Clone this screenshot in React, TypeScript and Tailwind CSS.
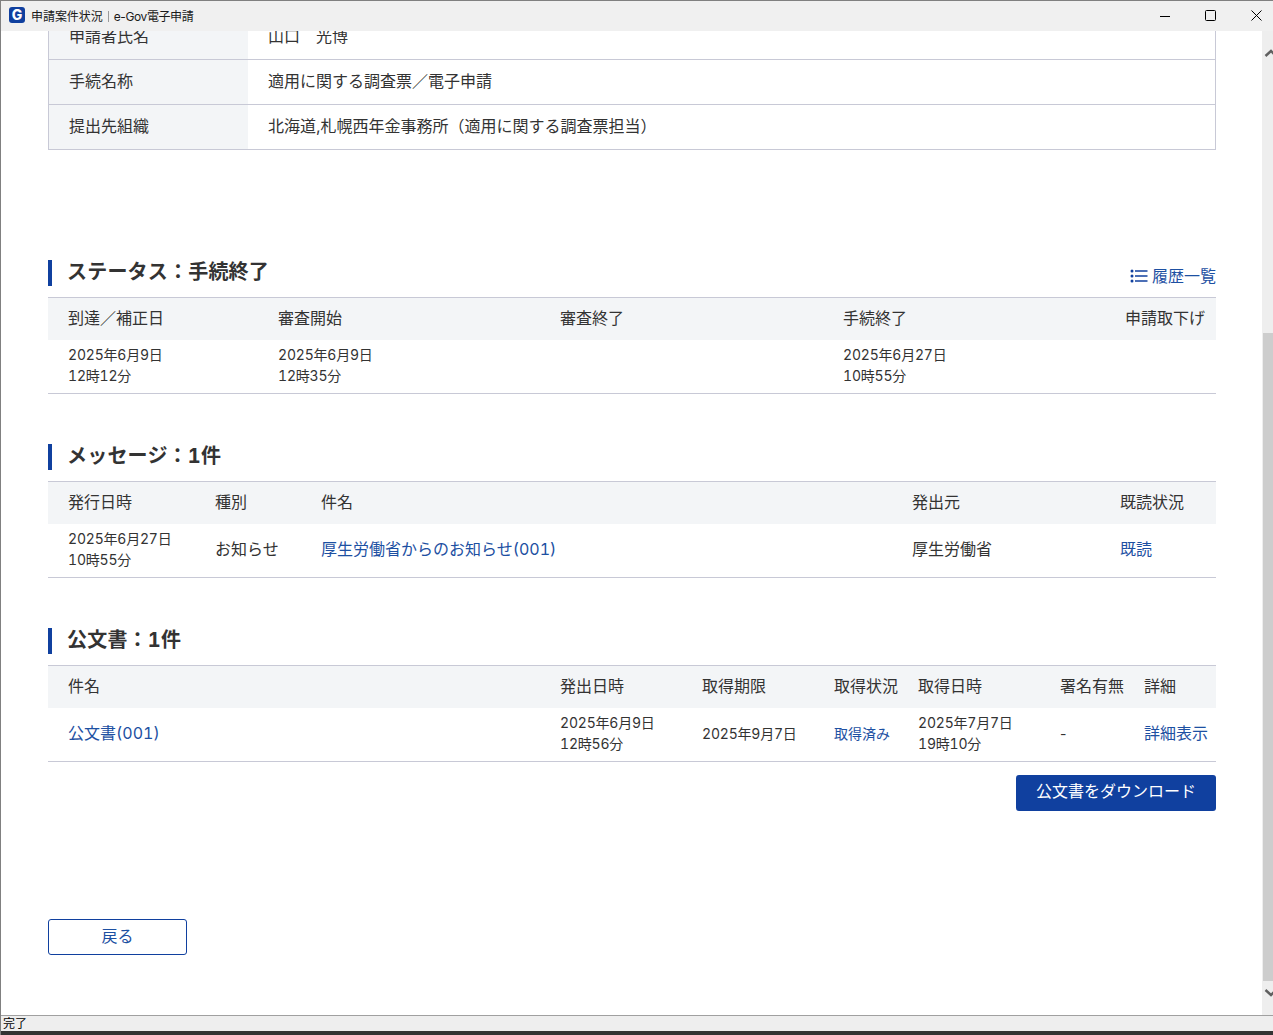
const FONT = "font-['Inter','Noto_Sans_CJK_JP',sans-serif]";

const INFO_ROWS = [
  { label: "申請者氏名", value: "山口　光博" },
  { label: "手続名称", value: "適用に関する調査票／電子申請" },
  { label: "提出先組織", value: "北海道,札幌西年金事務所（適用に関する調査票担当）" },
];

function TitleBar() {
  return (
    <div className="flex h-[30px] shrink-0 items-center bg-[#f0f0f0] pl-2 text-[#1a1a1a] relative z-10">
      <span className="mb-[2px] flex h-4 w-4 items-center justify-center rounded-[3px] bg-[#10409f] text-[14px] leading-none font-extrabold text-white">
        G
      </span>
      <span className="mt-px ml-[6px] text-[12px] leading-none tracking-[-0.05px]">申請案件状況</span>
      <span className="mx-[5px] mt-px h-[11px] w-px bg-[#9a9a9a]" />
      <span className="mt-px text-[12px] leading-none tracking-[-0.4px]">e-Gov電子申請</span>
      <div className="ml-auto flex items-center">
        <svg width="10" height="10" viewBox="0 0 10 10" className="mr-[35px] mb-px">
          <path d="M0 5.5 H10" stroke="#000" strokeWidth="1" />
        </svg>
        <svg width="11" height="11" viewBox="0 0 11 11" className="mr-[35px] mb-px">
          <rect x="0.5" y="0.5" width="10" height="10" rx="1" fill="none" stroke="#000" strokeWidth="1" />
        </svg>
        <svg width="11" height="11" viewBox="0 0 11 11" className="mr-[11px] mb-px">
          <path d="M0.5 0.5 L10.5 10.5 M10.5 0.5 L0.5 10.5" stroke="#000" strokeWidth="1" />
        </svg>
      </div>
    </div>
  );
}

function Scrollbar() {
  return (
    <div className="flex h-full w-[11px] shrink-0 flex-col overflow-hidden bg-[#eeeeee]">
      <svg width="11" height="12" viewBox="0 0 11 12" className="mt-[15px] shrink-0">
        <path d="M3.5 10 L9 5 L14 10" fill="none" stroke="#606060" strokeWidth="2.4" />
      </svg>
      <div className="mt-[275px] ml-px h-[648px] w-[10px] shrink-0 bg-[#cdcdcd]" />
      <svg width="11" height="12" viewBox="0 0 11 12" className="mt-[6px] shrink-0">
        <path d="M3.5 3 L9 8 L14 3" fill="none" stroke="#606060" strokeWidth="2.4" />
      </svg>
    </div>
  );
}

function Heading({ children }: { children: React.ReactNode }) {
  return (
    <h2 className="flex h-[26px] items-center border-l-4 border-[#10409f] pb-[2px] pl-[15px] text-[20px] leading-none font-bold tracking-[0.2px] text-[#333333] tabular-nums">
      {children}
    </h2>
  );
}

function DateCell({ lines }: { lines: string[] }) {
  return (
    <div className="pb-1 pl-5 text-[14px] leading-[21px] tracking-[-0.2px] tabular-nums">
      {lines.map((l) => (
        <div key={l}>{l}</div>
      ))}
    </div>
  );
}

function HeaderCell({ children }: { children: React.ReactNode }) {
  return <div className="pb-[2px] pl-5 whitespace-nowrap">{children}</div>;
}

const HEAD_ROW = "grid h-[43px] items-center border-t border-[#c8c9d6] bg-[#f3f5f7] text-[16px]";
const BODY_ROW = "grid h-[54px] items-center border-b border-[#c8c9d6] text-[16px]";
const LINK = "text-[#1d50a2]";

export default function App() {
  return (
    <div className={`flex h-[1035px] w-[1273px] flex-col overflow-hidden border-t border-l border-[#808080] bg-white text-[#333333] ${FONT}`}>
      <TitleBar />
      <div className="flex h-[984px] shrink-0">
        <main className="h-full w-[1261px] shrink-0 overflow-hidden pl-[47px]">
          <section className="mt-[-16px] w-[1168px] border-x border-[#c8c9d6]">
            {INFO_ROWS.map((r) => (
              <div key={r.label} className="flex h-[45px] border-b border-[#c8c9d6] text-[16px]">
                <div className="flex w-[199px] items-center bg-[#f3f5f7] pb-[2px] pl-5">{r.label}</div>
                <div className="flex items-center pb-[2px] pl-5">{r.value}</div>
              </div>
            ))}
          </section>

          <section className="mt-[110px] w-[1168px]">
            <div className="mb-[11px] flex items-end justify-between">
              <Heading>ステータス：手続終了</Heading>
              <a className={`flex items-center text-[16px] leading-[20px] ${LINK}`}>
                <svg width="18" height="14" viewBox="0 0 18 14" className="mr-[4px]">
                  <circle cx="2" cy="2" r="1.5" fill="#10409f" />
                  <circle cx="2" cy="7" r="1.5" fill="#10409f" />
                  <circle cx="2" cy="12" r="1.5" fill="#10409f" />
                  <path d="M5 2 H17.5 M5 7 H17.5 M5 12 H17.5" stroke="#10409f" strokeWidth="1.6" />
                </svg>
                履歴一覧
              </a>
            </div>
            <div className={`${HEAD_ROW} grid-cols-[210px_282px_283px_282px_111px]`}>
              <HeaderCell>到達／補正日</HeaderCell>
              <HeaderCell>審査開始</HeaderCell>
              <HeaderCell>審査終了</HeaderCell>
              <HeaderCell>手続終了</HeaderCell>
              <HeaderCell>申請取下げ</HeaderCell>
            </div>
            <div className={`${BODY_ROW} grid-cols-[210px_282px_283px_282px_111px]`}>
              <DateCell lines={["2025年6月9日", "12時12分"]} />
              <DateCell lines={["2025年6月9日", "12時35分"]} />
              <div />
              <DateCell lines={["2025年6月27日", "10時55分"]} />
              <div />
            </div>
          </section>

          <section className="mt-[50px] w-[1168px]">
            <div className="mb-[11px]">
              <Heading>メッセージ：1件</Heading>
            </div>
            <div className={`${HEAD_ROW} grid-cols-[147px_106px_591px_208px_116px]`}>
              <HeaderCell>発行日時</HeaderCell>
              <HeaderCell>種別</HeaderCell>
              <HeaderCell>件名</HeaderCell>
              <HeaderCell>発出元</HeaderCell>
              <HeaderCell>既読状況</HeaderCell>
            </div>
            <div className={`${BODY_ROW} grid-cols-[147px_106px_591px_208px_116px]`}>
              <DateCell lines={["2025年6月27日", "10時55分"]} />
              <div className="pb-1 pl-5">お知らせ</div>
              <a className={`pb-1 pl-5 tabular-nums ${LINK}`}>厚生労働省からのお知らせ(001)</a>
              <div className="pb-1 pl-5">厚生労働省</div>
              <a className={`pb-1 pl-5 ${LINK}`}>既読</a>
            </div>
          </section>

          <section className="mt-[50px] w-[1168px]">
            <div className="mb-[11px]">
              <Heading>公文書：1件</Heading>
            </div>
            <div className={`${HEAD_ROW} grid-cols-[492px_142px_132px_84px_142px_84px_92px]`}>
              <HeaderCell>件名</HeaderCell>
              <HeaderCell>発出日時</HeaderCell>
              <HeaderCell>取得期限</HeaderCell>
              <HeaderCell>取得状況</HeaderCell>
              <HeaderCell>取得日時</HeaderCell>
              <HeaderCell>署名有無</HeaderCell>
              <HeaderCell>詳細</HeaderCell>
            </div>
            <div className={`${BODY_ROW} grid-cols-[492px_142px_132px_84px_142px_84px_92px]`}>
              <a className={`pb-1 pl-5 tabular-nums ${LINK}`}>公文書(001)</a>
              <DateCell lines={["2025年6月9日", "12時56分"]} />
              <div className="pb-[2px] pl-5 text-[14px] tracking-[-0.2px] tabular-nums">2025年9月7日</div>
              <a className={`pb-[2px] pl-5 text-[14px] ${LINK}`}>取得済み</a>
              <DateCell lines={["2025年7月7日", "19時10分"]} />
              <div className="pb-[2px] pl-5 text-[14px]">-</div>
              <a className={`pb-1 pl-5 ${LINK}`}>詳細表示</a>
            </div>
            <div className="mt-[13px] flex justify-end">
              <button className="h-9 w-[200px] rounded-[3px] bg-[#10409f] pb-1 text-[16px] text-white">
                公文書をダウンロード
              </button>
            </div>
          </section>

          <button className={`mt-[108px] h-9 w-[139px] rounded-[3px] border border-[#10409f] bg-white pb-[2px] text-[16px] ${LINK}`}>
            戻る
          </button>
        </main>
        <div className="flex-1" />
        <Scrollbar />
      </div>
      <div className="h-[16px] shrink-0 border-t border-[#a0a0a0] bg-[#eeeeee] pl-[2px] text-[12px] leading-[15px] text-black">
        完了
      </div>
      <div className="flex-1 bg-[#333333]" />
    </div>
  );
}
